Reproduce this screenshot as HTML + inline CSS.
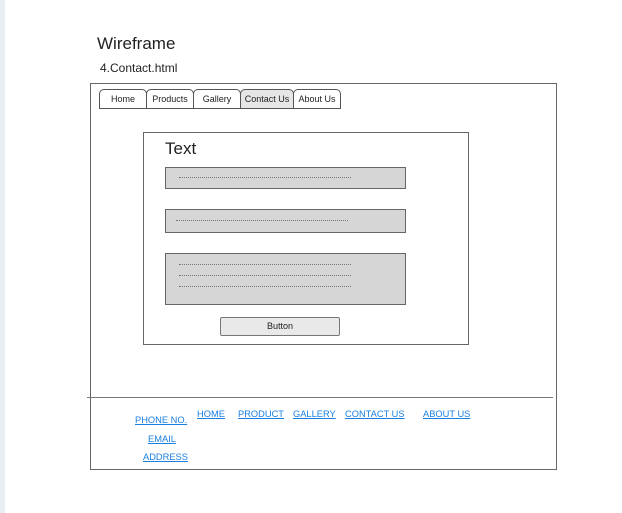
<!DOCTYPE html>
<html><head><style>
body{margin:0;width:622px;height:513px;background:#fff;position:relative;overflow:hidden;font-family:"Liberation Sans",sans-serif}
.a{position:absolute}
.tab{position:absolute;top:89px;border:1px solid #555;border-radius:5px 5px 0 0;font-size:9px;text-align:center;line-height:18px;color:#222;background:#fff;box-sizing:border-box;height:20px}
.inp{position:absolute;left:165px;width:241px;background:#d6d6d6;border:1px solid #666;box-sizing:border-box}
.dot{position:absolute;height:0;border-top:1px dotted #777}
.f{position:absolute;font-size:9.3px;color:#1a7fe0;text-decoration:underline;white-space:nowrap}
</style></head><body>
<div class="a" style="left:0;top:0;width:5px;height:513px;background:#e9eef3"></div>
<div class="a" style="left:97px;top:34px;font-size:17px;color:#222">Wireframe</div>
<div class="a" style="left:100px;top:61px;font-size:12px;color:#222">4.Contact.html</div>
<div class="a" style="left:90px;top:83px;width:465px;height:385px;border:1px solid #666"></div>
<div class="tab" style="left:99px;width:48px">Home</div>
<div class="tab" style="left:146px;width:48px">Products</div>
<div class="tab" style="left:193px;width:48px">Gallery</div>
<div class="tab" style="left:240px;width:54px;background:#e6e6e6">Contact Us</div>
<div class="tab" style="left:293px;width:48px">About Us</div>
<div class="a" style="left:143px;top:132px;width:324px;height:211px;border:1px solid #666"></div>
<div class="a" style="left:165px;top:139px;font-size:17px;color:#222">Text</div>
<div class="inp" style="top:167px;height:22px"></div>
<div class="dot" style="left:179px;top:177px;width:172px"></div>
<div class="inp" style="top:209px;height:24px"></div>
<div class="dot" style="left:176px;top:220px;width:172px"></div>
<div class="inp" style="top:253px;height:52px"></div>
<div class="dot" style="left:179px;top:264px;width:172px"></div>
<div class="dot" style="left:179px;top:275px;width:172px"></div>
<div class="dot" style="left:179px;top:286px;width:172px"></div>
<div class="a" style="left:220px;top:317px;width:120px;height:19px;background:#e9e9e9;border:1px solid #777;border-radius:2px;box-sizing:border-box;font-size:9px;text-align:center;line-height:17px;color:#222">Button</div>
<div class="a" style="left:87px;top:397px;width:466px;height:0;border-top:1px solid #777"></div>
<div class="f" style="left:135px;top:415px">PHONE NO.</div>
<div class="f" style="left:148px;top:434px">EMAIL</div>
<div class="f" style="left:143px;top:452px">ADDRESS</div>
<div class="f" style="left:197px;top:409px">HOME</div>
<div class="f" style="left:238px;top:409px">PRODUCT</div>
<div class="f" style="left:293px;top:409px">GALLERY</div>
<div class="f" style="left:345px;top:409px">CONTACT US</div>
<div class="f" style="left:423px;top:409px">ABOUT US</div>
</body></html>
